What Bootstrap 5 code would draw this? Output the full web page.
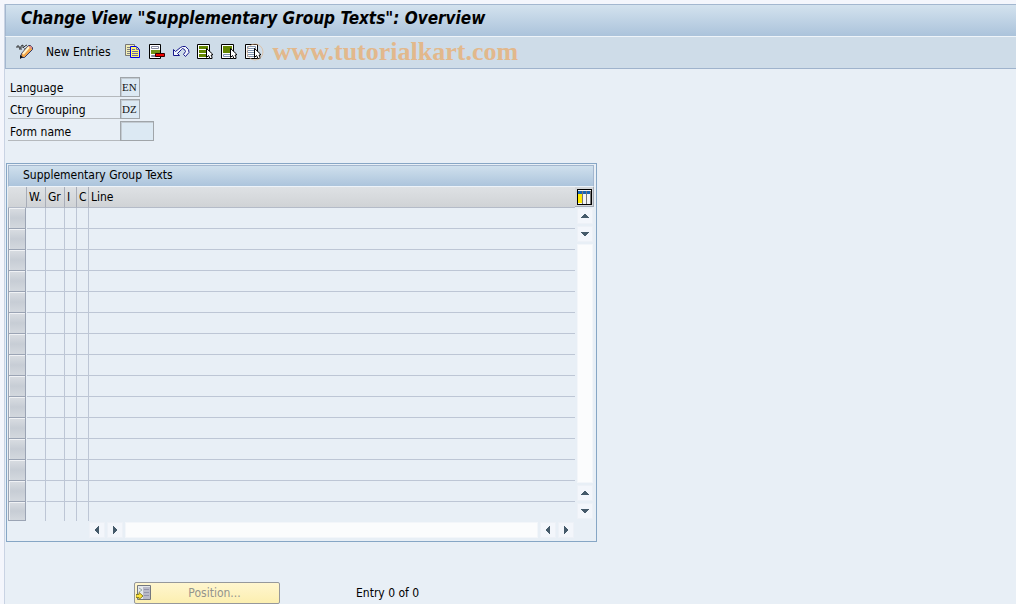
<!DOCTYPE html>
<html lang="en">
<head>
<meta charset="utf-8">
<meta name="viewport" content="width=device-width, initial-scale=1">
<title>Change View "Supplementary Group Texts": Overview</title>
<link href="https://cdn.jsdelivr.net/npm/bootstrap@5.3.0/dist/css/bootstrap.min.css" rel="stylesheet">
<style>
  body { background: #f4f6fc; font-family: "DejaVu Sans Condensed", "DejaVu Sans", sans-serif; font-size: 12px; line-height: 16px; color: #000; }
  button { padding: 0; border: 0; background: none; color: inherit; }
  svg { display: block; }
  .screen { background: #e8eff6; border-left: 1px solid #c9d3e3; margin-left: 4px; min-height: calc(100vh - 4px); }
  .page-top { height: 4px; }
  .titlebar { height: 32px; padding: 0 15px; border-top: 1px solid #a3b7cf; border-left: 1px solid #a3b7cf; background: linear-gradient(#d3e2ee, #abc3db); }
  .titlebar h1 { font-size: 17px; line-height: 26px; font-weight: bold; font-style: italic; margin: 0; }
  .toolbar { height: 33px; padding: 0 10px 2px; border-top: 1px solid #eef4f9; border-bottom: 1px solid #9fb3cc; border-left: 1px solid #a3b7cf; background: #cedce8; }
  .toolbar button { height: 18px; }
  .tools { margin-left: 14px; gap: 8px; }
  .tools svg { width: 16px; height: 16px; overflow: visible; }
  .brand-mark { font-family: "Liberation Serif", serif; font-weight: bold; font-size: 26px; line-height: 30px; color: #e2b88c; margin-left: 12px; }
  .fields { padding: 8px 0 0 3px; }
  .field-line { height: 22px; }
  .field-line label { width: 112px; height: 20px; padding: 3px 2px 0; border-bottom: 1px solid #b5b9bd; }
  .field-line input { height: 20px; width: 20px; padding: 0 1px; border: 1px solid #a0a5a9; border-radius: 0; box-shadow: inset 1px 1px #c3cbd2; background: #dce9f3; font: 11px/16px "Liberation Serif", serif; color: #111; }
  .field-line input.wide { width: 34px; }
  .panel { max-width: 591px; margin: 20px 0 0 1px; border: 1px solid #86a6c5; padding: 1px 2px 2px 1px; }
  .panel h2 { font-size: 12px; line-height: 16px; height: 22px; margin: 0; padding: 1px 14px; border: 1px solid #a3b7cf; border-bottom-color: #edf3f9; background: linear-gradient(#cfe0ed, #acc4dc); }
  .grid { width: 100%; table-layout: fixed; border-collapse: separate; border-spacing: 0; }
  .grid th { height: 21px; padding: 0 0 0 2px; line-height: 18px; font-weight: normal; white-space: nowrap; overflow: hidden; border-right: 1px solid #a8adb8; border-bottom: 1px solid #b4bbc8; background: linear-gradient(#dee1e4, #d0d3d6); }
  .grid th:last-child { border-right: 0; }
  .grid td { height: 21px; padding: 0; border-right: 1px solid #bdc6d5; border-bottom: 1px solid #bdc6d5; }
  .grid td:last-child { border-right: 0; }
  .grid tr:last-child td { height: 19px; border-bottom: 0; }
  .grid td:first-child { border: 0; }
  .row-pick { display: block; width: 18px; height: 21px; border: 1px solid #9ba4b4; border-width: 0 1px 1px 1px; background: linear-gradient(#d9dde2, #c7cdd5 50%, #d3d8de); box-shadow: inset 1px 1px #f0f2f5; }
  .grid tr:last-child .row-pick { height: 19px; }
  .side { width: 19px; }
  .configure { width: 19px; height: 20px; padding: 1px 0 0 2px; background: #d3d6d9; border-right: 1px solid #a3abb6; border-bottom: 1px solid #a3abb6; }
  .side-bar { width: 16px; padding: 1px 0 2px; margin-left: 2px; gap: 2px; }
  .arrow { width: 16px; height: 16px; background: #f3f6fb; border: 1px solid #edf1f7; flex: none; }
  .track { background: #fbfcfd; border: 1px solid #f3f6fa; }
  .cross-bar { height: 18px; padding: 1px 20px 1px 81px; gap: 2px; }
  .footer-line { padding: 40px 0 0 129px; gap: 76px; }
  .position { width: 146px; height: 22px; border: 1px solid #96989b; border-radius: 2px; background: linear-gradient(#fff6cf, #fcefb0); color: #94948d; padding: 0 1px; }
</style>
</head>
<body>
<svg class="d-none" aria-hidden="true">
  <symbol id="up" viewBox="0 0 14 14"><path fill="#455a6a" d="M3 9h8V8h-1V7H9V6H8V5H6v1H5v1H4v1H3z"/></symbol>
  <symbol id="down" viewBox="0 0 14 14"><path fill="#455a6a" d="M3 5h8v1h-1v1H9v1H8v1H6V8H5V7H4V6H3z"/></symbol>
  <symbol id="left" viewBox="0 0 14 14"><path fill="#455a6a" d="M9 3v8H8v-1H7V9H6V8H5V6h1V5h1V4h1V3z"/></symbol>
  <symbol id="right" viewBox="0 0 14 14"><path fill="#455a6a" d="M5 3v8h1v-1h1V9h1V8h1V6H8V5H7V4H6V3z"/></symbol>
  <symbol id="pointer" viewBox="0 0 8 12"><path d="M1.500.5v9l2-2 1.500 3h2V9L6 7h1.500V6z" fill="#fff" stroke="#000" stroke-width="1"/></symbol>
</svg>
<div class="page-top"></div>
<main class="screen">
  <header class="titlebar"><h1>Change View "Supplementary Group Texts": Overview</h1></header>
  <div class="toolbar d-flex align-items-center" role="toolbar" aria-label="Application toolbar">
    <button type="button" aria-label="Display or change"><svg width="18" height="18" viewBox="0 0 18 18"><path d="M1 5V3h2v2h2V3l2-1v3l2-2 2-1M3 6h3M8 6h2" fill="none" stroke="#333"/><path d="M4.500 14.500l1-4 7-8h2l2 2v2l-8 8z" fill="#f3a548" stroke="#353b65"/><path d="M7 11l6-7" stroke="#fff4cc" stroke-width="2"/><path d="M13 3h2l1 1v2l-3-2z" fill="#db8c8c"/><path d="M4 12v4l3-2z" fill="#111"/></svg></button>
    <button type="button" class="ms-2 ps-1">New Entries</button>
    <div class="tools d-flex">
      <button type="button" aria-label="Copy as"><svg viewBox="0 0 16 16"><path d="M.5.5h9v11h-9z" fill="#f1edb5" stroke="#777"/><path d="M2 3.500h4M2 5.500h3M2 7.500h3M2 9.500h3" stroke="#808080"/><path d="M5.500 2.500h6l3 3v8h-9z" fill="#fff46c" stroke="#0000e6"/><path d="M11.500 2.500v3h3M7 5.500h3M7 7.500h6M7 9.500h6M7 11.500h6" fill="none" stroke="#6868a8"/></svg></button>
      <button type="button" aria-label="Delete"><svg viewBox="0 0 16 16"><path d="M.5.500h11v14H.5z" fill="#fff" stroke="#000"/><path d="M2.500 2.500h7v2h-7zM2.500 11.500h7v1h-7z" fill="#fff" stroke="#8588a0"/><path d="M2 6h9v4H2z" fill="#719417"/><path d="M6.500 9.500h9v3h-9z" fill="#f00000" stroke="#300"/></svg></button>
      <button type="button" aria-label="Undo change"><svg viewBox="0 0 16 16"><path d="M.5 5.500v6h6l-2-2 4-4 1-1 2 1 1 2-2 3 2 2 3.500-4-.5-3-3-3h-3l-2 1-5 4z" fill="#f1f5fb" stroke="#18188c"/></svg></button>
      <button type="button" aria-label="Select all"><svg viewBox="0 0 16 16"><path d="M.5.500h12v14H.5z" fill="#fff" stroke="#000"/><path d="M2 2h9v3H2zM2 6h9v3H2zM2 10h9v3H2z" fill="#638600"/><use href="#pointer" x="8" y="4" width="8" height="12"/></svg></button>
      <button type="button" aria-label="Select block"><svg viewBox="0 0 16 16"><path d="M.5.500h12v14H.5z" fill="#fff" stroke="#000"/><path d="M2 2h9v7H2z" fill="#638600"/><path d="M2.500 10.500h8v2h-8z" fill="#fff" stroke="#8095b0"/><use href="#pointer" x="8" y="4" width="8" height="12"/></svg></button>
      <button type="button" aria-label="Deselect all"><svg viewBox="0 0 16 16"><path d="M.5.500h12v14H.5z" fill="#fff" stroke="#000"/><path d="M2.500 2.500h8v2h-8zM2.500 6.500h8v2h-8zM2.500 10.500h8v2h-8z" fill="#fff" stroke="#8095b0"/><use href="#pointer" x="8" y="4" width="8" height="12"/><circle cx="10" cy="8" r="8" fill="none" stroke="#e2b384" opacity=".6"/></svg></button>
    </div>
    <span class="brand-mark">www.tutorialkart.com</span>
  </div>

  <form class="fields">
    <div class="field-line d-flex"><label for="lang">Language</label><input id="lang" value="EN"></div>
    <div class="field-line d-flex"><label for="grouping">Ctry Grouping</label><input id="grouping" value="DZ"></div>
    <div class="field-line d-flex"><label for="form">Form name</label><input id="form" class="wide"></div>
  </form>

  <section class="panel">
    <h2>Supplementary Group Texts</h2>
    <div class="d-flex">
      <div class="flex-grow-1">
        <table class="grid" aria-label="Supplementary Group Texts">
          <colgroup><col style="width:19px"><col style="width:19px"><col style="width:19px"><col style="width:12px"><col style="width:12px"><col></colgroup>
          <thead><tr><th></th><th>W.</th><th>Gr</th><th>I</th><th>C</th><th>Line</th></tr></thead>
          <tbody id="rows"></tbody>
        </table>
      </div>
      <div class="side d-flex flex-column">
        <button type="button" class="configure" aria-label="Configuration"><svg width="15" height="16" viewBox="0 0 15 16"><path fill="#000" d="M0 0h15v16H0z"/><path fill="#f4f4f4" d="M1 1h13v14H1z"/><path fill="#1764b4" d="M1 2h13v3H1z"/><path fill="#ffe900" d="M1 5h4v9H1z"/><path fill="#777" d="M5 2h1v13H5zM9 2h1v13H9zM13 2h1v13h-1z"/></svg></button>
        <div class="side-bar d-flex flex-column flex-grow-1">
          <button type="button" class="arrow" aria-label="Scroll up"><svg width="14" height="14"><use href="#up"/></svg></button>
          <button type="button" class="arrow" aria-label="Next row"><svg width="14" height="14"><use href="#down"/></svg></button>
          <div class="track flex-grow-1"></div>
          <button type="button" class="arrow" aria-label="Previous row"><svg width="14" height="14"><use href="#up"/></svg></button>
          <button type="button" class="arrow" aria-label="Scroll down"><svg width="14" height="14"><use href="#down"/></svg></button>
        </div>
      </div>
    </div>
    <div class="cross-bar d-flex">
      <button type="button" class="arrow" aria-label="Scroll left"><svg width="14" height="14"><use href="#left"/></svg></button>
      <button type="button" class="arrow" aria-label="Next column"><svg width="14" height="14"><use href="#right"/></svg></button>
      <div class="track flex-grow-1"></div>
      <button type="button" class="arrow" aria-label="Previous column"><svg width="14" height="14"><use href="#left"/></svg></button>
      <button type="button" class="arrow" aria-label="Scroll right"><svg width="14" height="14"><use href="#right"/></svg></button>
    </div>
  </section>

  <div class="footer-line d-flex align-items-center">
    <button type="button" class="position d-flex align-items-center"><svg width="15" height="16" viewBox="0 0 15 16"><path d="M1.500.5h13v14h-13z" fill="#e5e8eb" stroke="#73777f"/><path d="M7 2h7v12H7z" fill="#b9bac8"/><path d="M8 4.500h5M8 7.500h5M8 10.500h5" stroke="#9495aa"/><path d="M3 3l3 2M3 7l3-2" stroke="#9aa"/><path d="M0 9.500h3V7.500l4 3.500-4 3.500v-2H0z" fill="#ffe43c" stroke="#8b8220"/></svg><span class="flex-grow-1">Position...</span></button>
    <span>Entry 0 of 0</span>
  </div>
</main>
<script src="https://cdn.jsdelivr.net/npm/bootstrap@5.3.0/dist/js/bootstrap.bundle.min.js"></script>
<script>
  const rows = document.getElementById('rows');
  for (let i = 1; i <= 15; i++) {
    rows.insertAdjacentHTML('beforeend', `<tr><td><button type="button" class="row-pick" aria-label="Select row ${i}"></button></td><td></td><td></td><td></td><td></td><td></td></tr>`);
  }
</script>
</body>
</html>
